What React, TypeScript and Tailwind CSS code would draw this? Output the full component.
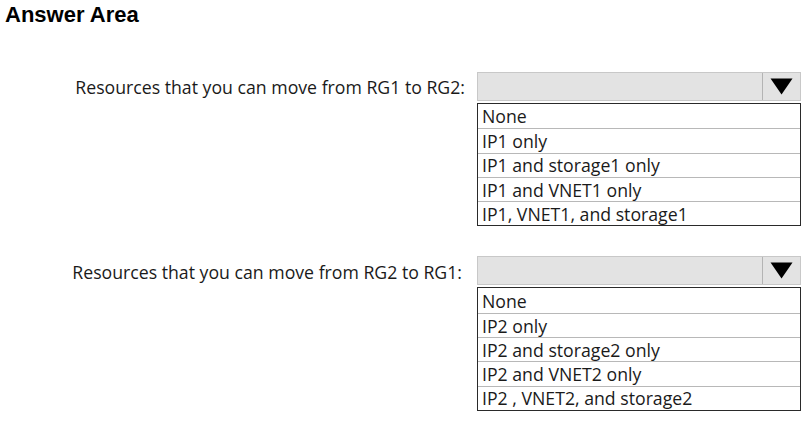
const groups = [
  {
    label: "Resources that you can move from RG1 to RG2:",
    labelPad: "pr-[12px]",
    options: ["None", "IP1 only", "IP1 and storage1 only", "IP1 and VNET1 only", "IP1, VNET1, and storage1"],
  },
  {
    label: "Resources that you can move from RG2 to RG1:",
    labelPad: "pr-[15px]",
    options: ["None", "IP2 only", "IP2 and storage2 only", "IP2 and VNET2 only", "IP2 , VNET2, and storage2"],
  },
];

function Dropdown({ options }: { options: string[] }) {
  return (
    <div className="w-[324px]">
      <div className="flex h-[29px] border border-[#c8c8c8] bg-[#e3e3e3]">
        <div className="flex-1" />
        <div className="flex w-[38px] items-center justify-center border-l border-[#b4b4b4]">
          <svg width="23" height="17" viewBox="0 0 23 17">
            <polygon points="0.5,0.5 22.5,0.5 11.5,16.5" fill="#000" />
          </svg>
        </div>
      </div>
      <div className="mt-[2px] border border-[#2a2a2a] bg-white">
        {options.map((o, i) => (
          <div
            key={o}
            className={
              "flex h-[24.3px] items-center pl-[4px] pt-[2px] text-[17.7px] leading-none text-[#1a1a1a] " +
              (i > 0 ? "border-t border-[#b8b8b8]" : "")
            }
          >
            {o}
          </div>
        ))}
      </div>
    </div>
  );
}

export default function App() {
  return (
    <div className="h-[422px] w-[810px] bg-white" style={{ fontFamily: "'Open Sans', sans-serif" }}>
      <h1
        className="pl-[5px] pt-[2px] text-[22px] font-bold leading-[25px] text-black"
        style={{ fontFamily: "'Liberation Sans', Arial, sans-serif" }}
      >
        Answer Area
      </h1>
      <div className="flex flex-col gap-[30px] pt-[45px]">
        {groups.map((g) => (
          <div key={g.label} className="flex items-start">
            <div className={"flex h-[31px] w-[477px] items-center justify-end text-[17.7px] text-[#1a1a1a] " + g.labelPad}>
              {g.label}
            </div>
            <Dropdown options={g.options} />
          </div>
        ))}
      </div>
    </div>
  );
}
